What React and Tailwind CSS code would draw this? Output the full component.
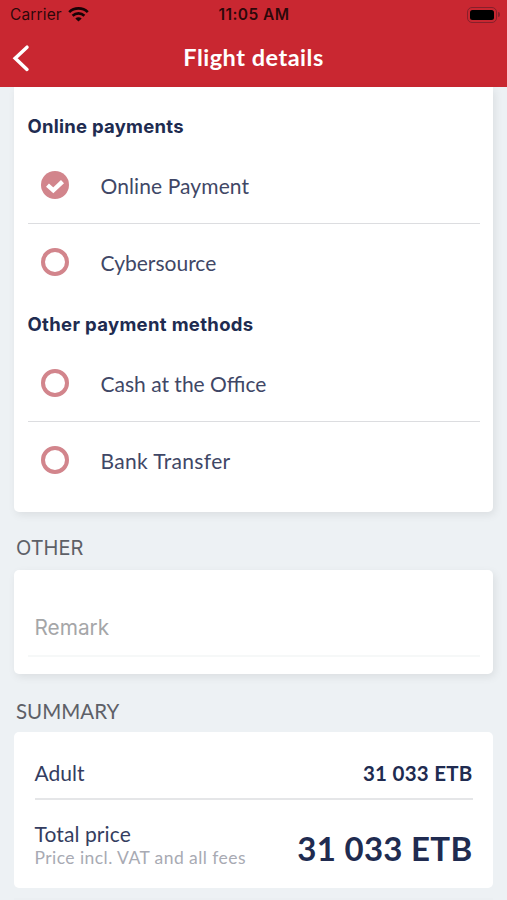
const card = "mx-auto w-[479px] rounded-[5px] bg-white";

function StatusBar() {
  return (
    <div className="flex h-[29px] items-center font-['Inter',sans-serif] text-black/80">
      <div className="flex flex-1 items-center pl-[10px]">
        <span className="text-[15.5px] tracking-[0.15px]">Carrier</span>
        <svg className="ml-[6px]" width="21" height="15" viewBox="0 0 21 15" fill="none" stroke="#180306" strokeWidth="2.7">
          <path d="M1.2 5.1C6.3.2 14.7.2 19.8 5.1" />
          <path d="M4.6 8.7C8 5.6 13 5.6 16.4 8.7" />
          <path d="M10.5 14.6 7.3 11.5C9.1 9.9 11.9 9.9 13.7 11.5Z" fill="#180306" stroke="none" />
        </svg>
      </div>
      <span className="-ml-[2px] text-[15.5px] font-semibold tracking-[0.45px]">11:05 AM</span>
      <div className="flex flex-1 items-center justify-end pr-[7px]">
        <div className="h-[16px] w-[30px] rounded-[5px] border border-[#87202b] p-[2px]">
          <div className="h-full w-full rounded-[2.5px] bg-black" />
        </div>
        <div className="ml-px h-[5px] w-[2px] rounded-r-full bg-[#87202b]" />
      </div>
    </div>
  );
}

function Option({ label, checked, spacing = "" }) {
  return (
    <div className="flex h-[76px] items-center pl-[13px]">
      <svg width="28" height="28" viewBox="0 0 28 28" fill="none">
        {checked ? (
          <>
            <circle cx="14" cy="14" r="14" fill="#d2858c" />
            <path d="m6.5 14.1 5.8 5.2 9.2-8.7" stroke="#fff" strokeWidth="4.4" />
          </>
        ) : (
          <circle cx="14" cy="14" r="12" stroke="#d2858c" strokeWidth="4" />
        )}
      </svg>
      <span className={`ml-[32px] pt-[2px] text-[21px] text-[#3f4766] ${spacing}`}>{label}</span>
    </div>
  );
}

export default function App() {
  return (
    <div className="h-[900px] w-[507px] overflow-hidden bg-[#edf1f4] font-['Lato',sans-serif] whitespace-nowrap">
      <header className="h-[87px] bg-[#c92731]">
        <StatusBar />
        <div className="grid h-[58px] grid-cols-[60px_1fr_60px] items-center">
          <svg className="ml-[12px]" width="18" height="28" viewBox="0 0 18 28" fill="none" stroke="#fff" strokeWidth="3.5" strokeLinecap="round">
            <path d="M15 3.2 3.2 14.2 15 25.4" />
          </svg>
          <h1 className="text-center text-[23.5px] font-bold tracking-[0.5px] text-white">Flight details</h1>
        </div>
      </header>

      <section className="mx-auto h-[424.5px] w-[479px] rounded-b-[5px] bg-white px-[13.5px] pt-[21px] text-[#202b50] shadow-[2px_3px_8px_rgba(0,0,0,0.08)]">
        <h2 className="h-[39px] font-['Inter',sans-serif] text-[18.5px] leading-[37px] font-bold tracking-[0.25px]">Online payments</h2>
        <Option label="Online Payment" checked spacing="tracking-[0.1px]" />
        <hr className="border-[#dcdde0]" />
        <Option label="Cybersource" />
        <h2 className="h-[45px] font-['Inter',sans-serif] text-[18.5px] leading-[49px] font-bold tracking-[0.33px]">Other payment methods</h2>
        <Option label="Cash at the Office" />
        <hr className="border-[#dcdde0]" />
        <Option label="Bank Transfer" spacing="tracking-[0.35px]" />
      </section>

      <h3 className="h-[58px] pl-[16px] font-['Inter',sans-serif] text-[20px] leading-[73px] text-[#5d6067]">OTHER</h3>
      <section className={`${card} h-[104.5px] px-[13.5px] pt-[37px] shadow-[2px_3px_8px_rgba(0,0,0,0.08)]`}>
        <div className="h-[50px] border-b-2 border-[#f6f8f8] pl-[7px] font-['Inter',sans-serif] text-[20.8px] leading-[42px] text-[#a5a6a8]">Remark</div>
      </section>

      <h3 className="h-[58px] pl-[16px] text-[20.5px] leading-[74px] text-[#5d6067]">SUMMARY</h3>
      <section className={`${card} h-[156px] px-[20.5px] text-[#202b50]`}>
        <div className="flex h-[68px] items-center justify-between border-b-2 border-[#e5e6e8] pt-[16px]">
          <span className="text-[21px] text-[#343d60]">Adult</span>
          <span className="text-[20.5px] font-bold tracking-[0.25px]">31 033 ETB</span>
        </div>
        <div className="flex items-start justify-between">
          <div className="pt-[20px]">
            <div className="text-[21px] leading-[28px] tracking-[0.1px] text-[#343d60]">Total price</div>
            <div className="text-[17.5px] leading-[20px] tracking-[0.44px] text-[#a8aab3]">Price incl. VAT and all fees</div>
          </div>
          <div className="pt-[26px] text-[33px] leading-[44px] font-bold tracking-[0.3px]">31 033 ETB</div>
        </div>
      </section>
      <div className="mx-auto mt-[10px] h-[2px] w-[479px] bg-[#ebeff2]" />
    </div>
  );
}
